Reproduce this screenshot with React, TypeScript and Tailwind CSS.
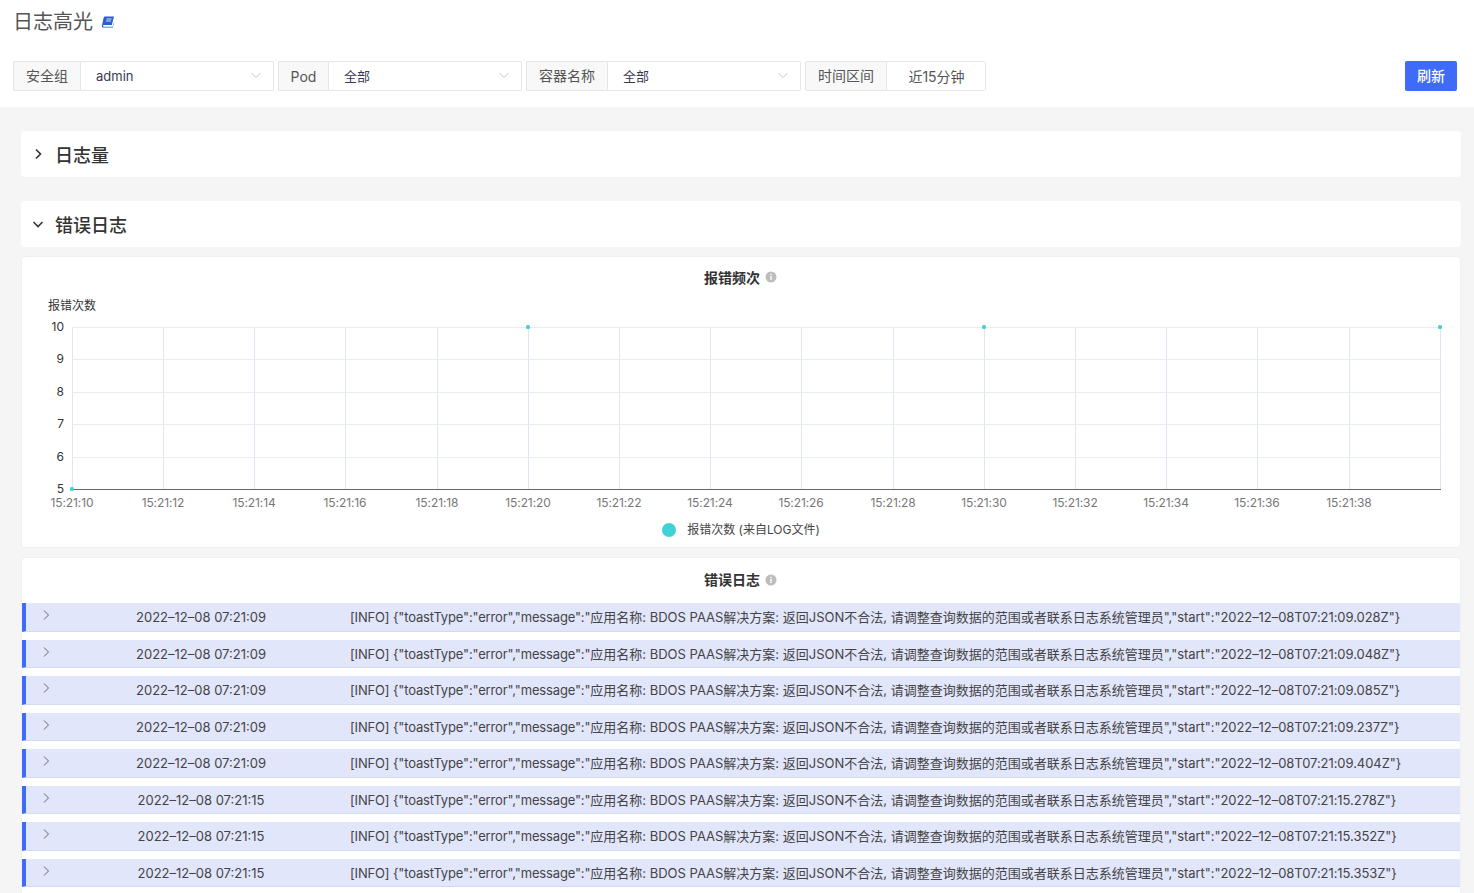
import React from "react";

const FONT = "font-['Inter','Noto_Sans_CJK_SC',sans-serif]";

function Chevron({ dir, className }: { dir: "right" | "down"; className?: string }) {
  return (
    <svg viewBox="0 0 12 12" className={className} fill="none" stroke="currentColor">
      {dir === "right" ? <path d="M4 1.5 L8.5 6 L4 10.5" /> : <path d="M1.5 4 L6 8.5 L10.5 4" />}
    </svg>
  );
}

function BookIcon() {
  return (
    <svg viewBox="0 0 14 14" className="w-[14px] h-[14px] ml-[8px] mt-[-1px]">
      <path d="M4 1.5 H13 L10.8 10 H3 C2.2 10 1.9 10.6 2 11 C2.1 11.5 2.5 11.7 3 11.7 H11.6 L12.8 7.5 L13 8 L11.8 12.6 H2.6 C1.2 12.6 0.6 11.6 0.9 10.4 L2.6 3 C2.8 2.1 3.3 1.5 4 1.5 Z" fill="#2a5fcc" />
      <path d="M5.5 4 H10.6 M5 6 H10" stroke="#fff" strokeWidth="0.8" />
    </svg>
  );
}

function InfoIcon() {
  return (
    <svg viewBox="0 0 12 12" className="w-[12px] h-[12px]">
      <circle cx="6" cy="6" r="5.5" fill="#bdbdbd" />
      <rect x="5.3" y="5" width="1.4" height="4" fill="#fff" />
      <rect x="5.3" y="2.8" width="1.4" height="1.4" fill="#fff" />
    </svg>
  );
}

function Filter({
  label,
  labelW,
  value,
  w,
  select = true,
  latin = false,
}: {
  label: string;
  labelW: string;
  value: string;
  w: string;
  select?: boolean;
  latin?: boolean;
}) {
  return (
    <div className={`flex h-[30px] ${w}`}>
      <div className={`${labelW} ${latin ? "pt-[1px]" : "pb-[1px]"} shrink-0 flex items-center justify-center bg-[#f8f8f8] border border-[#e6e6e6] rounded-l-[2px] text-[14px] text-[#555555]`}>
        {label}
      </div>
      <div className="flex-1 relative flex items-center bg-white border border-l-0 border-[#e6e6e6] rounded-r-[2px]">
        {select ? (
          <>
            <span className="pl-[15px] pt-[1px] text-[13px] text-[#3b3a52] flex-1">{value}</span>
            <Chevron dir="down" className="w-[12px] h-[12px] mr-[11px] text-[#c8c8d0] mt-[-3px]" />
          </>
        ) : (
          <span className="flex-1 text-center text-[14px] text-[#555555] pl-[1px]">{value}</span>
        )}
      </div>
    </div>
  );
}

function Section({ title, open }: { title: string; open: boolean }) {
  return (
    <div className="h-[46px] bg-white rounded-[4px] flex items-center pl-[11px]">
      <Chevron dir={open ? "down" : "right"} className="w-[12px] h-[12px] text-[#333333] stroke-[1.6]" />
      <span className="ml-[11px] mt-[2px] text-[18px] font-medium text-[#333333]">{title}</span>
    </div>
  );
}

const XS = [72, 163, 254, 345, 437, 528, 619, 710, 801, 893, 984, 1075, 1166, 1257, 1349, 1440];
const XL = ["15:21:10", "15:21:12", "15:21:14", "15:21:16", "15:21:18", "15:21:20", "15:21:22", "15:21:24", "15:21:26", "15:21:28", "15:21:30", "15:21:32", "15:21:34", "15:21:36", "15:21:38"];
const YS = [
  [10, 71],
  [9, 103],
  [8, 136],
  [7, 168],
  [6, 201],
  [5, 233],
] as const;

function Chart() {
  return (
    <svg width="1438" height="290" viewBox="0 256 1438 290" className="block absolute left-0 top-[-1px]">
      <g transform="translate(-22 0)">
        {XS.map((x) => (
          <line key={x} x1={x + 0.5} x2={x + 0.5} y1={327} y2={489} stroke="#dfe6f3" strokeWidth="1" />
        ))}
        {YS.slice(0, 5).map(([n, y]) => (
          <line key={n} x1={72} x2={1441} y1={y + 256.5} y2={y + 256.5} stroke="#e9ecf0" strokeWidth="1" />
        ))}
        <line x1={72} x2={1441} y1={489.5} y2={489.5} stroke="#666666" strokeWidth="1" />
        {YS.map(([n, y]) => (
          <text key={n} x={64} y={y + 260} textAnchor="end" fontSize="12" fill="#333333">{n}</text>
        ))}
        {XL.map((l, i) => (
          <text key={l} x={XS[i]} y={507} textAnchor="middle" fontSize="12" letterSpacing="-0.1" fill="#777777">{l}</text>
        ))}
        {[[72, 489], [528, 327], [984, 327], [1440, 327]].map(([x, y]) => (
          <rect key={x} x={x - 2} y={y - 2} width="4" height="4" rx="1.5" fill="#3fd3d6" />
        ))}
      </g>
    </svg>
  );
}

const ROWS = [
  ["2022–12–08 07:21:09", "2022–12–08T07:21:09.028Z"],
  ["2022–12–08 07:21:09", "2022–12–08T07:21:09.048Z"],
  ["2022–12–08 07:21:09", "2022–12–08T07:21:09.085Z"],
  ["2022–12–08 07:21:09", "2022–12–08T07:21:09.237Z"],
  ["2022–12–08 07:21:09", "2022–12–08T07:21:09.404Z"],
  ["2022–12–08 07:21:15", "2022–12–08T07:21:15.278Z"],
  ["2022–12–08 07:21:15", "2022–12–08T07:21:15.352Z"],
  ["2022–12–08 07:21:15", "2022–12–08T07:21:15.353Z"],
];

function Row({ time, start }: { time: string; start: string }) {
  return (
    <div className="h-[28.5px] flex bg-[#e2e6fb] border-l-[4px] border-[#3f6bfb] border-b border-b-[#d5daf3] text-[13px] text-[#444444] shrink-0">
      <div className="w-[26px] shrink-0 flex justify-end">
        <Chevron dir="right" className="w-[12px] h-[12px] text-[#666666] mt-[6px]" />
      </div>
      <div className="w-[298px] shrink-0 text-center leading-[28px]">{time}</div>
      <div className="leading-[28px] whitespace-nowrap overflow-hidden">
        <span className="tracking-[-0.16px]">{`[INFO] {"toastType":"error","message":"`}</span>
        {"应用名称: BDOS PAAS解决方案: 返回JSON不合法, 请调整查询数据的范围或者联系日志系统管理员"}
        <span className="tracking-[-0.06px]">{`","start":"${start}"}`}</span>
      </div>
    </div>
  );
}

export default function App() {
  return (
    <div className={`w-[1474px] h-[893px] overflow-hidden bg-[#f5f5f5] ${FONT}`}>
      <header className="h-[107px] bg-white px-[13px] flex flex-col">
        <div className="h-[44px] flex items-center text-[20px] text-[#555555]">
          <span>日志高光</span>
          <BookIcon />
        </div>
        <div className="mt-[17px] flex gap-[4px] items-center">
          <Filter label="安全组" labelW="w-[68px]" value="admin" w="w-[261px]" />
          <Filter label="Pod" labelW="w-[51px]" value="全部" w="w-[244px]" latin />
          <Filter label="容器名称" labelW="w-[82px]" value="全部" w="w-[275px]" />
          <Filter label="时间区间" labelW="w-[82px]" value="近15分钟" w="w-[181px]" select={false} />
          <button className="ml-auto mr-[4px] w-[52px] h-[30px] pb-[1px] bg-[#3f6bfb] text-white text-[14px] font-medium rounded-[2px]">刷新</button>
        </div>
      </header>

      <main className="pt-[24px] px-[21px] pr-[13px] flex flex-col">
        <Section title="日志量" open={false} />
        <div className="h-[24px]" />
        <Section title="错误日志" open={true} />

        <section className="mt-[9px] h-[292px] bg-white rounded-[4px] border border-[#f0f0f0] relative">
          <Chart />
          <div className="relative h-[40px] mb-[1px] pr-[1px] flex items-center justify-center gap-[5px] text-[14px] font-semibold text-[#333333]">
            <span>报错频次</span>
            <InfoIcon />
          </div>
          <div className="relative pl-[26px] text-[12px] text-[#333333] leading-[16px]">报错次数</div>
          <div className="absolute left-0 right-0 top-[264px] flex items-center justify-center gap-[11px] text-[12px] text-[#444444]">
            <span className="w-[14px] h-[14px] rounded-full bg-[#3fd3d6]" />
            <span>报错次数 (来自LOG文件)</span>
          </div>
        </section>

        <section className="mt-[9px] h-[340px] bg-white rounded-t-[4px] border border-[#f0f0f0] border-b-0">
          <div className="h-[44px] pb-[1px] pr-[1px] flex items-center justify-center gap-[5px] text-[14px] font-semibold text-[#333333]">
            <span>错误日志</span>
            <InfoIcon />
          </div>
          <div className="mt-[1px] flex flex-col gap-[8px]">
            {ROWS.map(([t, s]) => (
              <Row key={s} time={t} start={s} />
            ))}
          </div>
        </section>
      </main>
    </div>
  );
}
